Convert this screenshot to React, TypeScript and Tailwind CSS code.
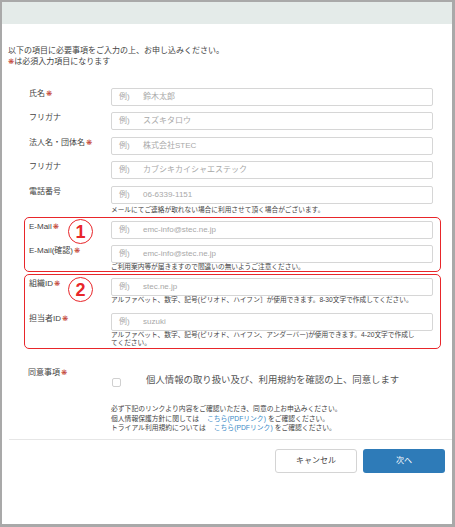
const jp = { fontFamily: '"Liberation Sans", "Noto Sans CJK JP", sans-serif' };

const Req = () => (
  <span className="ml-[1px] text-[7.5px] text-[#c0392b]" style={{ fontFamily: '"DejaVu Sans", sans-serif' }}>
    ❋
  </span>
);

type RowProps = {
  label: string;
  required?: boolean;
  placeholder: string;
  className?: string;
};

const Row = ({ label, required, placeholder, className = "" }: RowProps) => (
  <div className={`flex items-start pl-[5px] ${className}`}>
    <div className="w-[82px] text-[8px] leading-[12px] text-[#444]">
      {label}
      {required && <Req />}
    </div>
    <div className="flex h-[18px] w-[322px] items-center rounded-[2px] border border-[#d6d6d6] bg-white pl-[7px] text-[8px] text-[#a8a8a8]">
      <span className="w-[24px]">例)</span>
      <span>{placeholder}</span>
    </div>
  </div>
);

const Hint = ({ children, className = "" }: { children: React.ReactNode; className?: string }) => (
  <div className={`whitespace-nowrap text-[6.7px] leading-[8px] text-[#444] ${className}`}>{children}</div>
);

const Badge = ({ n, className = "" }: { n: string; className?: string }) => (
  <div
    className={`absolute left-[43px] flex h-[25px] w-[25px] items-center justify-center rounded-full border-[1.5px] border-[#e8262a] bg-white text-[18px] font-bold leading-none text-[#e8262a] ${className}`}
    style={{ fontFamily: '"Liberation Sans", Arial, sans-serif' }}
  >
    {n}
  </div>
);

export default function App() {
  return (
    <div className="h-[527px] w-[455px] bg-[#a9a9a9] pb-[3px] pl-[2px] pr-[3px] pt-[2px]" style={jp}>
      <div className="h-full bg-white">
        <div className="h-[22px] bg-[#e4ebe9]" />

        <div className="mt-[21px] pl-[6px] text-[8px] leading-[11px] text-[#444]">
          <div>以下の項目に必要事項をご入力の上、お申し込みください。</div>
          <div>
            <span className="text-[7.5px] text-[#c0392b]" style={{ fontFamily: '"DejaVu Sans", sans-serif' }}>
              ❋
            </span>
            は必須入力項目になります
          </div>
        </div>

        <div className="ml-[22px] mt-[21px] w-[417px]">
          <Row label="氏名" required placeholder="鈴木太郎" />
          <Row label="フリガナ" placeholder="スズキタロウ" className="mt-[6px]" />
          <Row label="法人名・団体名" required placeholder="株式会社STEC" className="mt-[7px]" />
          <Row label="フリガナ" placeholder="カブシキカイシャエステック" className="mt-[6px]" />
          <Row label="電話番号" placeholder="06-6339-1151" className="mt-[7px]" />
          <Hint className="ml-[87px] mt-[2px]">メールにてご連絡が取れない場合に利用させて頂く場合がございます。</Hint>

          <div className="relative mt-[3px] rounded-[5px] border border-[#e8262a] pt-[3px]">
            <Row label="E-Mail" required placeholder="emc-info@stec.ne.jp" className="-ml-px" />
            <Row label="E-Mail(確認)" required placeholder="emc-info@stec.ne.jp" className="-ml-px mt-[6px]" />
            <Hint className="pl-[86px]">ご利用案内等が届きますので間違いの無いようご注意ください。</Hint>
            <Badge n="1" className="top-[1px]" />
          </div>

          <div className="relative mt-[2px] rounded-[5px] border border-[#e8262a] pb-[1px] pt-[3px]">
            <Row label="組織ID" required placeholder="stec.ne.jp" className="-ml-px" />
            <Hint className="pl-[86px]">
              アルファベット、数字、記号(ピリオド、ハイフン］が使用できます。8-30文字で作成してください。
            </Hint>
            <Row label="担当者ID" required placeholder="suzuki" className="-ml-px mt-[9px]" />
            <Hint className="pl-[86px]">
              <div>アルファベット、数字、記号(ピリオド、ハイフン、アンダーバー)が使用できます。4-20文字で作成し</div>
              <div>てください。</div>
            </Hint>
            <Badge n="2" className="top-[2px]" />
          </div>

          <div className="mt-[18px] flex items-start pl-[4px]">
            <div className="w-[84px] text-[8px] leading-[12px] text-[#444]">
              同意事項
              <Req />
            </div>
            <div className="mt-[11px] h-[9px] w-[9px] rounded-[2px] border border-[#d0d0d0] bg-white" />
            <div className="ml-[25px] mt-[7px] text-[9.4px] leading-[12px] text-[#555]">
              個人情報の取り扱い及び、利用規約を確認の上、同意します
            </div>
          </div>

          <div className="ml-[87px] mt-[17px] whitespace-nowrap text-[6.8px] leading-[9.7px] text-[#444]">
            <div>必ず下記のリンクより内容をご確認いただき、同意の上お申込みください。</div>
            <div>
              個人情報保護方針に関しては<span className="ml-[8px] mr-[2px] text-[#3a8ac6]">こちら(PDFリンク)</span>をご確認ください。
            </div>
            <div>
              トライアル利用規約については<span className="ml-[8px] mr-[2px] text-[#3a8ac6]">こちら(PDFリンク)</span>をご確認ください。
            </div>
          </div>
        </div>

        <div className="ml-[7px] mt-[6px] border-t border-[#e6e6e6]" />

        <div className="mr-[7px] mt-[9px] flex justify-end gap-[6px]">
          <button className="flex h-[24px] w-[82px] items-center justify-center rounded-[3px] border border-[#d4d4d4] bg-white text-[8px] text-[#444]">
            キャンセル
          </button>
          <button className="flex h-[24px] w-[82px] items-center justify-center rounded-[3px] bg-[#2e7bb8] text-[8px] text-white">
            次へ
          </button>
        </div>
      </div>
    </div>
  );
}
